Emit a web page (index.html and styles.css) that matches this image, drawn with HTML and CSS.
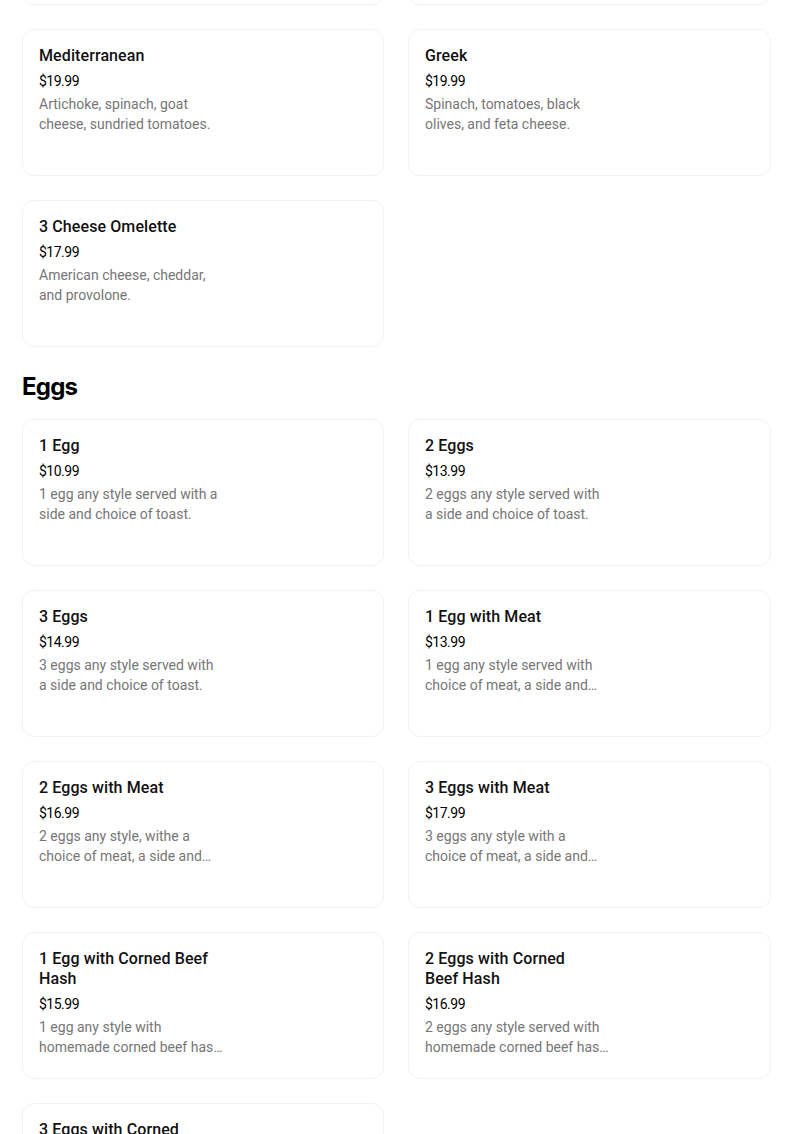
FILE: index.html
```html
<!DOCTYPE html>
<html lang="en">
<head>
    <meta charset="UTF-8">
    <meta name="viewport" content="width=device-width, initial-scale=1.0">
    <title>Menu</title>
    <link rel="stylesheet" href="styles.css">
</head>
<body>
<main class="menu">
	<!-- Omelettes (scrolled, top row cut off) -->
	<section class="category category-scrolled">
		<ul class="items">
			<li class="item">
				<h3 class="item-name">Western</h3>
				<div class="item-price">$18.99</div>
				<p class="item-desc">Ham, bell peppers, onions, and cheddar cheese.</p>
			</li>
			<li class="item">
				<h3 class="item-name">Veggie</h3>
				<div class="item-price">$17.99</div>
				<p class="item-desc">Mushrooms, spinach, tomatoes, and onions.</p>
			</li>
			<li class="item">
				<h3 class="item-name">Mediterranean</h3>
				<div class="item-price">$19.99</div>
				<p class="item-desc">Artichoke, spinach, goat cheese, sundried tomatoes.</p>
			</li>
			<li class="item">
				<h3 class="item-name">Greek</h3>
				<div class="item-price">$19.99</div>
				<p class="item-desc">Spinach, tomatoes, black olives, and feta cheese.</p>
			</li>
			<li class="item">
				<h3 class="item-name">3 Cheese Omelette</h3>
				<div class="item-price">$17.99</div>
				<p class="item-desc">American cheese, cheddar, and provolone.</p>
			</li>
		</ul>
	</section>

	<!-- Eggs -->
	<section class="category">
		<h2 class="category-title">Eggs</h2>
		<ul class="items">
			<li class="item">
				<h3 class="item-name">1 Egg</h3>
				<div class="item-price">$10.99</div>
				<p class="item-desc">1 egg any style served with a side and choice of toast.</p>
			</li>
			<li class="item">
				<h3 class="item-name">2 Eggs</h3>
				<div class="item-price">$13.99</div>
				<p class="item-desc">2 eggs any style served with a side and choice of toast.</p>
			</li>
			<li class="item">
				<h3 class="item-name">3 Eggs</h3>
				<div class="item-price">$14.99</div>
				<p class="item-desc">3 eggs any style served with a side and choice of toast.</p>
			</li>
			<li class="item">
				<h3 class="item-name">1 Egg with Meat</h3>
				<div class="item-price">$13.99</div>
				<p class="item-desc">1 egg any style served with choice of meat, a side and choice of toast.</p>
			</li>
			<li class="item">
				<h3 class="item-name">2 Eggs with Meat</h3>
				<div class="item-price">$16.99</div>
				<p class="item-desc">2 eggs any style, withe a choice of meat, a side and choice of toast.</p>
			</li>
			<li class="item">
				<h3 class="item-name">3 Eggs with Meat</h3>
				<div class="item-price">$17.99</div>
				<p class="item-desc">3 eggs any style with a choice of meat, a side and choice of toast.</p>
			</li>
			<li class="item">
				<h3 class="item-name">1 Egg with Corned Beef Hash</h3>
				<div class="item-price">$15.99</div>
				<p class="item-desc">1 egg any style with homemade corned beef hash and choice of toast.</p>
			</li>
			<li class="item">
				<h3 class="item-name">2 Eggs with Corned Beef Hash</h3>
				<div class="item-price">$16.99</div>
				<p class="item-desc">2 eggs any style served with homemade corned beef hash and choice of toast.</p>
			</li>
			<li class="item">
				<h3 class="item-name">3 Eggs with Corned Beef Hash</h3>
				<div class="item-price">$17.99</div>
				<p class="item-desc">3 eggs any style served with homemade corned beef hash and choice of toast.</p>
			</li>
		</ul>
	</section>
</main>
</body>
</html>
```

FILE: styles.css
```css
* { margin: 0; padding: 0; box-sizing: border-box; list-style: none; }
body { background: #ffffff; color: #000000; font-family: Roboto, "Liberation Sans", sans-serif; overflow: hidden; }
.menu { width: 804px; padding: 0 33px 0 22px; }
.category-scrolled { margin-top: -142px; }
.category-title { font-family: Inter, Roboto, sans-serif; font-size: 24px; font-weight: 700; line-height: 32px; letter-spacing: -0.8px; margin: 24px 0 16px; }
.items { display: grid; grid-template-columns: 362px 363px; column-gap: 24px; row-gap: 24px; }
.item { height: 147px; border: 1px solid #f2f2f2; border-radius: 12px; padding: 16px; }
.item-name { width: 174px; font-size: 16px; font-weight: 500; line-height: 20px; letter-spacing: 0.1px; color: #111111; }
.item-price { width: 184px; font-size: 14px; line-height: 20px; margin-top: 5px; letter-spacing: -0.5px; color: #000000; }
.item-desc { width: 184px; font-size: 14px; line-height: 20px; margin-top: 3px; color: #767676; display: -webkit-box; -webkit-box-orient: vertical; -webkit-line-clamp: 2; overflow: hidden; }
```
